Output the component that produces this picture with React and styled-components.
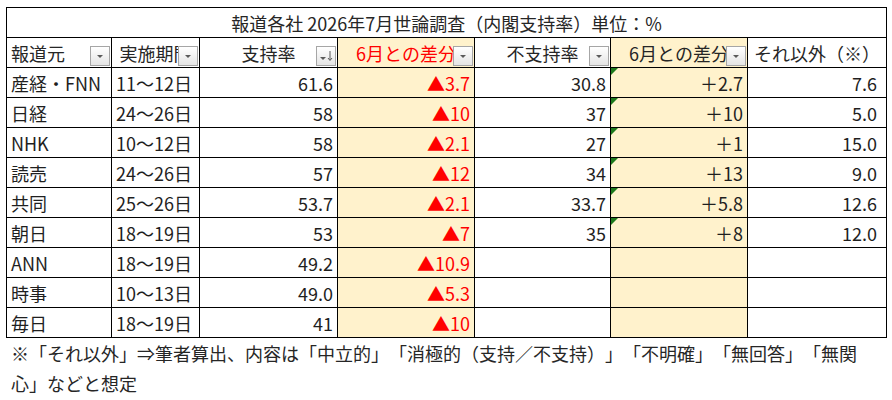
import React from 'react';
import styled, { createGlobalStyle } from 'styled-components';

const GlobalStyle = createGlobalStyle`
  html, body {
    margin: 0;
    background: #ffffff;
  }
  body {
    font-family: 'Noto Sans CJK JP', 'Noto Sans', sans-serif;
    color: #1f1f1f;
    text-spacing-trim: space-all;
    font-feature-settings: "chws" 0, "halt" 0;
  }
`;

const Page = styled.div`
  width: 892px;
  height: 400px;
  padding: 7px 0 0 6px;
  box-sizing: border-box;
  overflow: hidden;
`;

const Table = styled.table`
  border-collapse: collapse;
  table-layout: fixed;
  width: 880px;
  font-size: 18px;
`;

const Row = styled.tr`
  height: 30px;
`;

const Title = styled.th`
  border: 1px solid #000;
  font-weight: 400;
  text-align: center;
  padding: 0;
  color: #262626;
`;

const Head = styled.th`
  position: relative;
  border: 1px solid #000;
  font-weight: 400;
  padding: 0 4px;
  text-align: ${(p) => (p.$left ? 'left' : 'center')};
  background: ${(p) => (p.$diff ? '#fff2cc' : '#ffffff')};
  color: ${(p) => (p.$red ? '#ff0000' : '#262626')};
  white-space: nowrap;
  overflow: hidden;
`;

const Cell = styled.td`
  position: relative;
  border: 1px solid #000;
  padding: ${(p) => (p.$wide ? '0 9px 0 4px' : '0 4px')};
  text-align: ${(p) => (p.$left ? 'left' : 'right')};
  background: ${(p) => (p.$diff ? '#fff2cc' : '#ffffff')};
  color: ${(p) => (p.$red ? '#ff0000' : '#1f1f1f')};
  white-space: nowrap;
  line-height: 1;
`;

const FilterButton = styled.span`
  position: absolute;
  right: 1px;
  bottom: 1px;
  width: 18px;
  height: 18px;
  border: 1px solid #a6a6a6;
  background: linear-gradient(#ffffff, #e4e4e4);
  display: flex;
  align-items: center;
  justify-content: center;
`;

const ErrorMark = styled.span`
  position: absolute;
  top: 0;
  left: 0;
  width: 0;
  height: 0;
  border-top: 7px solid #1d7a1d;
  border-right: 7px solid transparent;
`;

const Note = styled.p`
  margin: 0;
  padding-left: 5px;
  font-size: 18px;
  line-height: 30px;
  color: #262626;
`;

const Filter = ({ sorted }) => (
  <FilterButton>
    {sorted ? (
      <svg width="16" height="14" viewBox="0 0 16 14">
        <path d="M2 8 L8 8 L5 11 Z" fill="#5a5a5a" />
        <path d="M12 2 L12 11 M10 9 L12 11.5 L14 9" stroke="#5a5a5a" strokeWidth="1" fill="none" />
      </svg>
    ) : (
      <svg width="10" height="8" viewBox="0 0 10 8">
        <path d="M2 3 L8 3 L5 6 Z" fill="#5a5a5a" />
      </svg>
    )}
  </FilterButton>
);

const headers = [
  { label: '報道元', left: true, filter: true },
  { label: '実施期間', filter: true },
  { label: '支持率', filter: true, sorted: true },
  { label: '6月との差分', filter: true, diff: true, red: true },
  { label: '不支持率', filter: true },
  { label: '6月との差分', filter: true, diff: true },
  { label: 'それ以外（※）' },
];

const rows = [
  ['産経・FNN', '11～12日', '61.6', '▲3.7', '30.8', '＋2.7', '7.6'],
  ['日経', '24～26日', '58', '▲10', '37', '＋10', '5.0'],
  ['NHK', '10～12日', '58', '▲2.1', '27', '＋1', '15.0'],
  ['読売', '24～26日', '57', '▲12', '34', '＋13', '9.0'],
  ['共同', '25～26日', '53.7', '▲2.1', '33.7', '＋5.8', '12.6'],
  ['朝日', '18～19日', '53', '▲7', '35', '＋8', '12.0'],
  ['ANN', '18～19日', '49.2', '▲10.9', '', '', ''],
  ['時事', '10～13日', '49.0', '▲5.3', '', '', ''],
  ['毎日', '18～19日', '41', '▲10', '', '', ''],
];

const widths = [105, 88, 138, 137, 136, 137, 139];

export default function App() {
  return (
    <Page>
      <GlobalStyle />
      <Table>
        <colgroup>
          {widths.map((w, i) => (
            <col key={i} style={{ width: w }} />
          ))}
        </colgroup>
        <thead>
          <Row>
            <Title colSpan={7}>報道各社 2026年7月世論調査（内閣支持率）単位：%</Title>
          </Row>
          <Row>
            {headers.map((h, i) => (
              <Head key={i} $left={h.left} $diff={h.diff} $red={h.red}>
                {h.label}
                {h.filter && <Filter sorted={h.sorted} />}
              </Head>
            ))}
          </Row>
        </thead>
        <tbody>
          {rows.map((r, ri) => (
            <Row key={ri}>
              <Cell $left>{r[0]}</Cell>
              <Cell $left>{r[1]}</Cell>
              <Cell>{r[2]}</Cell>
              <Cell $diff $red>{r[3]}</Cell>
              <Cell>{r[4]}</Cell>
              <Cell $diff>
                {r[5] && <ErrorMark />}
                {r[5]}
              </Cell>
              <Cell $wide>{r[6]}</Cell>
            </Row>
          ))}
        </tbody>
      </Table>
      <Note>
        ※「それ以外」⇒筆者算出、内容は「中立的」「消極的（支持／不支持）」「不明確」「無回答」「無関
        <br />
        心」などと想定
      </Note>
    </Page>
  );
}
